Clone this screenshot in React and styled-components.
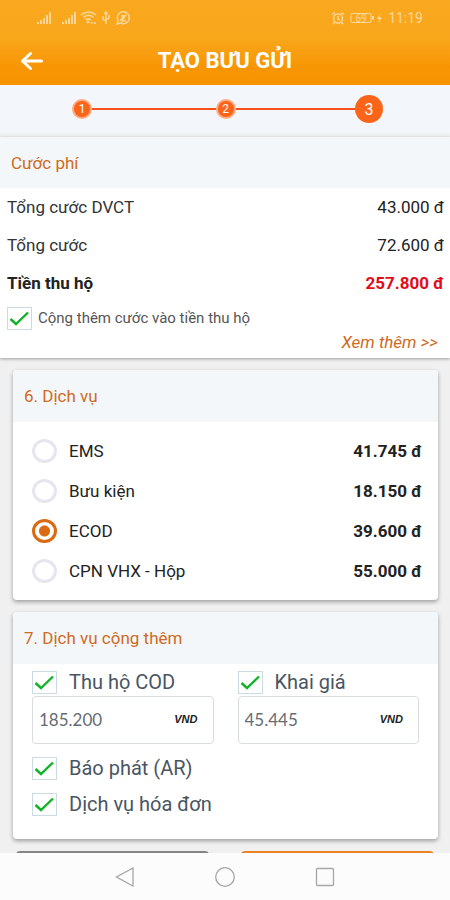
import React, { useState } from 'react'
import styled, { createGlobalStyle } from 'styled-components'

const SERVICES = [
  { id: 'ems', label: 'EMS', price: '41.745 đ' },
  { id: 'parcel', label: 'Bưu kiện', price: '18.150 đ' },
  { id: 'ecod', label: 'ECOD', price: '39.600 đ' },
  { id: 'cpn', label: 'CPN VHX - Hộp', price: '55.000 đ' },
]

const Check = ({ id, label, size }) => (
  <CheckLabel $size={size}>
    <CheckBox>
      <CheckInput type="checkbox" id={id} defaultChecked />
      <svg width="25" height="23" viewBox="0 0 25 23" fill="none" aria-hidden="true">
        <path d="M3.500 12L9 17L21 5.500" stroke="#13b329" strokeWidth="2.400" />
      </svg>
    </CheckBox>
    {label}
  </CheckLabel>
)

const Amount = ({ id, label, value }) => (
  <AmountBox>
    <AmountInput id={id} aria-label={label} defaultValue={value} />
    <Currency>VND</Currency>
  </AmountBox>
)

const StatusBar = () => (
  <Status>
    <svg width="96" height="16" viewBox="0 0 96 16" fill="none" aria-hidden="true">
      <g fill="currentColor">
        <path d="M0 12h2v2H0zM3 10h2v4H3zM6 8h2v6H6zM9 5h2v9H9zM12 2h2v12h-2z" />
        <path d="M25 12h2v2h-2zM28 10h2v4h-2zM31 8h2v6h-2zM34 5h2v9h-2zM37 2h2v12h-2z" />
        <circle cx="51" cy="12" r="1.500" />
        <path d="M54 12h1.500v2H54zM57 12h1.500v2H57z" />
      </g>
      <g stroke="currentColor" strokeWidth="1.500">
        <path d="M44 5c4.500-4 10.500-4 15 0M46.500 7.500c3-2.600 7-2.600 10 0M48.500 10c1.800-1.500 3.600-1.500 5.400 0" />
        <path d="M69 2v12M66 6v3l3 2M72 5v3l-3 2M67.500 4L69 2l1.500 2" />
        <path d="M80 14l1-3.500a6 6 0 1 1 2.500 2.500z" />
        <path d="M83 10.500l6-6M84 6h4l-3 5h4" />
      </g>
    </svg>
    <StatusRight>
      <svg width="54" height="14" viewBox="0 0 54 14" fill="none" aria-hidden="true">
        <g stroke="currentColor" strokeWidth="1.500">
          <circle cx="7" cy="7.500" r="4.500" />
          <path d="M7 5v3l2 1M1 3.500L4 1.500M13 3.500L10 1.500M3.500 11.500L2 13M10.500 11.500L12 13" />
          <rect x="20" y="2.500" width="20" height="9" rx="1" strokeWidth="1" />
        </g>
        <path d="M41 5h2v4h-2zM49.500 2L46 8h2.500L47 12.500L51 6.500h-2.500z" fill="currentColor" />
        <text x="30" y="10.500" textAnchor="middle" fontSize="10" fontFamily="Roboto, sans-serif" fill="currentColor">69</text>
      </svg>
      <span>11:19</span>
    </StatusRight>
  </Status>
)

const App = () => {
  const [service, setService] = useState('ecod')

  return (
    <Screen>
      <GlobalStyle />
      <Header>
        <StatusBar />
        <TitleBar>
          <BackButton type="button" aria-label="Quay lại">
            <svg width="24" height="20" viewBox="0 0 24 20" fill="none">
              <path d="M10.500 2.500L2.500 10L10.500 17.500M2.500 10H21.500" stroke="#fff" strokeWidth="3" strokeLinecap="round" strokeLinejoin="round" />
            </svg>
          </BackButton>
          <Title>TẠO BƯU GỬI</Title>
        </TitleBar>
      </Header>

      <Content>
        <Stepper>
          <Step><Dot>1</Dot></Step>
          <StepLine />
          <Step><Dot>2</Dot></Step>
          <StepLine />
          <Step><Dot $current>3</Dot></Step>
        </Stepper>

        <FeeSection>
          <FeeHeading>Cước phí</FeeHeading>
          <FeeRow><span>Tổng cước DVCT</span><span>43.000 đ</span></FeeRow>
          <FeeRow><span>Tổng cước</span><span>72.600 đ</span></FeeRow>
          <FeeRow $total><span>Tiền thu hộ</span><span>257.800 đ</span></FeeRow>
          <FeeCheck>
            <Check id="add-fee" label="Cộng thêm cước vào tiền thu hộ" size="small" />
          </FeeCheck>
          <MoreLink href="#more">Xem thêm &gt;&gt;</MoreLink>
        </FeeSection>

        <Card>
          <CardHeading>6. Dịch vụ</CardHeading>
          <ServiceList>
            {SERVICES.map((item) => (
              <ServiceRow key={item.id}>
                <Radio
                  type="radio"
                  name="service"
                  checked={service === item.id}
                  onChange={() => setService(item.id)}
                />
                <span>{item.label}</span>
                <Price>{item.price}</Price>
              </ServiceRow>
            ))}
          </ServiceList>
        </Card>

        <Card>
          <CardHeading>7. Dịch vụ cộng thêm</CardHeading>
          <Extras>
            <ExtraColumns>
              <div>
                <Check id="cod" label="Thu hộ COD" />
                <Amount id="cod-amount" label="Số tiền thu hộ" value="185.200" />
              </div>
              <div>
                <Check id="declare" label="Khai giá" />
                <Amount id="declare-amount" label="Giá trị khai" value="45.445" />
              </div>
            </ExtraColumns>
            <ExtraList>
              <Check id="ar" label="Báo phát (AR)" />
              <Check id="invoice" label="Dịch vụ hóa đơn" />
            </ExtraList>
          </Extras>
        </Card>

        <Actions>
          <ActionButton type="button" aria-label="Quay lại bước trước" />
          <ActionButton type="button" aria-label="Tạo bưu gửi" $primary />
        </Actions>
      </Content>

      <NavBar>
        <NavButton type="button" aria-label="Back">
          <svg width="20" height="20" viewBox="0 0 20 20"><path d="M18 1V19L1.500 10z" /></svg>
        </NavButton>
        <NavButton type="button" aria-label="Home">
          <svg width="20" height="20" viewBox="0 0 20 20"><circle cx="10" cy="10" r="9.300" /></svg>
        </NavButton>
        <NavButton type="button" aria-label="Recent apps">
          <svg width="20" height="20" viewBox="0 0 20 20"><rect x="1.500" y="1.500" width="17" height="17" rx="1" /></svg>
        </NavButton>
      </NavBar>
    </Screen>
  )
}

export default App

const GlobalStyle = createGlobalStyle`
  * {
    box-sizing: border-box;
  }

  body {
    margin: 0;
    font-family: Roboto, "Noto Sans", sans-serif;
    background: #f0f0f0;
  }
`;

const Screen = styled.div`
  display: flex;
  flex-direction: column;
  height: 100vh;
`;

const Header = styled.header`
  flex-shrink: 0;
  background: linear-gradient(#f9a91f 0%, #f9a71c 45%, #f79503 80%, #f79400 100%);
`;

const Status = styled.div`
  display: flex;
  justify-content: space-between;
  align-items: center;
  height: 36px;
  padding: 0 27px 0 37px;
  color: #fdd699;
`;

const StatusRight = styled.div`
  display: flex;
  align-items: center;
  gap: 3px;
  font-size: 14px;
`;

const TitleBar = styled.div`
  display: grid;
  grid-template-columns: 60px 1fr 60px;
  align-items: center;
  height: 49px;
`;

const BackButton = styled.button`
  display: flex;
  padding: 0 0 0 20px;
  border: none;
  background: none;
  cursor: pointer;
`;

const Title = styled.h1`
  margin: 0;
  color: #fff;
  font-size: 22px;
  font-weight: bold;
  text-align: center;
`;

const Content = styled.main`
  flex: 1;
  min-height: 0;
  overflow: hidden;
`;

const Stepper = styled.div`
  display: flex;
  align-items: center;
  height: 48px;
  padding: 0 67px 0 68px;
  margin-bottom: 4px;
  background: #f3f7fb;
`;

const Step = styled.div`
  position: relative;
  display: flex;
  justify-content: center;
  width: 28px;
`;

const Dot = styled.span`
  display: flex;
  justify-content: center;
  align-items: center;
  width: ${(props) => (props.$current ? 28 : 20)}px;
  height: ${(props) => (props.$current ? 28 : 20)}px;
  border: ${(props) => (props.$current ? 'none' : '2px solid #ffab82')};
  border-radius: 50%;
  background: #fc6419;
  color: #fff;
  font-size: ${(props) => (props.$current ? 16 : 12)}px;
`;

const StepLine = styled.div`
  flex: 1;
  height: 2px;
  margin: 0 -4px;
  background: #f5501e;
`;

const FeeSection = styled.section`
  padding-bottom: 6px;
  background: #fff;
  box-shadow: 0 1px 3px rgba(0, 0, 0, 0.35);
`;

const Heading = styled.h2`
  display: flex;
  align-items: center;
  margin: 0;
  background: #f3f7fa;
  color: #cf6a22;
  font-size: 17px;
  font-weight: normal;
`;

const FeeHeading = styled(Heading)`
  height: 51px;
  padding: 0 11px;
`;

const FeeRow = styled.div`
  display: flex;
  justify-content: space-between;
  align-items: center;
  height: 38px;
  padding: 0 6px 0 7px;
  color: ${(props) => (props.$total ? '#222' : '#333')};
  font-size: 17px;
  font-weight: ${(props) => (props.$total ? 'bold' : 'normal')};

  span:last-child {
    color: ${(props) => (props.$total ? '#e30b17' : '#222')};
  }
`;

const FeeCheck = styled.div`
  padding: 2px 7px 0;
`;

const MoreLink = styled.a`
  display: block;
  padding-right: 12px;
  color: #cf6a22;
  font-size: 17px;
  font-style: italic;
  line-height: 20px;
  text-align: right;
  text-decoration: none;
`;

const CheckLabel = styled.label`
  display: flex;
  align-items: center;
  gap: ${(props) => (props.$size === 'small' ? 6 : 12)}px;
  height: 28px;
  color: ${(props) => (props.$size === 'small' ? '#555' : '#4a5563')};
  font-size: ${(props) => (props.$size === 'small' ? 15 : 20)}px;
`;

const CheckBox = styled.span`
  display: grid;

  > * {
    grid-area: 1 / 1;
  }

  input:not(:checked) + svg {
    visibility: hidden;
  }

  svg {
    pointer-events: none;
  }
`;

const CheckInput = styled.input`
  appearance: none;
  width: 25px;
  height: 23px;
  margin: 0;
  border: 1px solid #cbdbe4;
  background: #fff;
`;

const Card = styled.section`
  margin: 12px 12px 0 13px;
  border-radius: 4px;
  background: #fff;
  box-shadow: 0 2px 4px rgba(0, 0, 0, 0.35);
`;

const CardHeading = styled(Heading)`
  height: 52px;
  padding: 0 11px;
  border-radius: 4px 4px 0 0;
`;

const ServiceList = styled.div`
  padding: 9px 16px 9px 19px;
`;

const ServiceRow = styled.label`
  display: flex;
  align-items: center;
  gap: 12px;
  height: 40px;
  color: #222;
  font-size: 17px;
`;

const Radio = styled.input`
  appearance: none;
  width: 25px;
  height: 24px;
  margin: 0;
  border: 3px solid #e6e6ef;
  border-radius: 50%;

  &:checked {
    border-color: #dc6a12;
    background: radial-gradient(circle, #dc6a12 5px, #fff 6px);
  }
`;

const Price = styled.span`
  margin-left: auto;
  font-weight: bold;
`;

const Extras = styled.div`
  padding: 4px 19px 21px;
`;

const ExtraColumns = styled.div`
  display: grid;
  grid-template-columns: repeat(2, minmax(0, 1fr));
  gap: 24px;
`;

const ExtraList = styled.div`
  display: flex;
  flex-direction: column;
  gap: 8px;
  padding-top: 10px;
`;

const AmountBox = styled.div`
  display: flex;
  align-items: center;
  height: 48px;
  padding: 0 15px 2px 6px;
  border: 1px solid #d9dde0;
  border-radius: 4px;
`;

const AmountInput = styled.input`
  flex: 1;
  min-width: 0;
  padding: 0;
  border: none;
  outline: none;
  background: none;
  color: #666c74;
  font-family: Lato, sans-serif;
  font-size: 17px;
`;

const Currency = styled.span`
  color: #222;
  font-family: "Liberation Sans", sans-serif;
  font-size: 11px;
  font-style: italic;
  font-weight: bold;
`;

const Actions = styled.div`
  display: grid;
  grid-template-columns: 1fr 1fr;
  gap: 32px;
  padding: 12px 16px;
`;

const ActionButton = styled.button`
  height: 44px;
  border: none;
  border-radius: 4px;
  background: ${(props) => (props.$primary ? '#e98420' : '#858585')};
`;

const NavBar = styled.nav`
  display: flex;
  justify-content: center;
  align-items: center;
  flex-shrink: 0;
  gap: 80px;
  height: 47px;
  background: #fcfcfc;
`;

const NavButton = styled.button`
  display: flex;
  padding: 0;
  border: none;
  background: none;

  svg {
    fill: none;
    stroke: #a6a6a6;
    stroke-width: 1.3;
  }
`;
